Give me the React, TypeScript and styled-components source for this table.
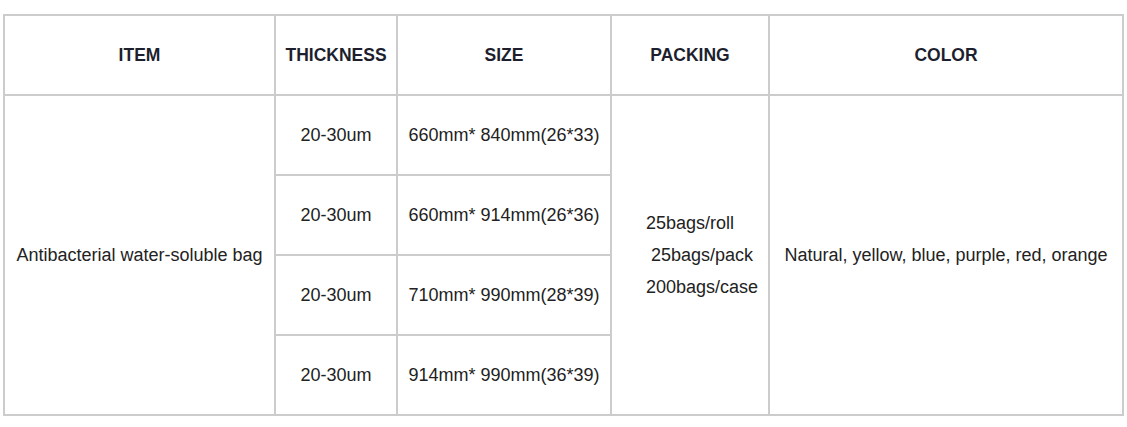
import React from "react";
import styled, { createGlobalStyle } from "styled-components";

const Global = createGlobalStyle`
  html, body { margin: 0; padding: 0; background: #ffffff; }
  body { padding: 14px 0 0 3px; font-family: "Liberation Sans", Arial, sans-serif; }
`;

const Grid = styled.div`
  display: grid;
  width: 1121px;
  grid-template-columns: 271px 122px 214px 158px 354px;
  grid-template-rows: repeat(5, 80px);
  border-top: 2px solid #cccccc;
  border-left: 2px solid #cccccc;
  box-sizing: border-box;
`;

const Cell = styled.div<{ $col?: number; $row?: number; $rows?: number; $head?: boolean }>`
  box-sizing: border-box;
  border-right: 2px solid #cccccc;
  border-bottom: 2px solid #cccccc;
  display: flex;
  align-items: center;
  justify-content: center;
  text-align: center;
  ${(p) => (p.$col ? `grid-column: ${p.$col};` : "")}
  ${(p) => (p.$row ? `grid-row: ${p.$row} / span ${p.$rows ?? 1};` : "")}
  font-size: ${(p) => (p.$head ? "17.5px" : "18px")};
  font-weight: ${(p) => (p.$head ? 700 : 400)};
  color: ${(p) => (p.$head ? "#1e1f2e" : "#222222")};
  white-space: nowrap;
`;

const PackCell = styled(Cell)`
  justify-content: flex-start;
  padding-left: 34px;
`;

const Lines = styled.div`
  display: flex;
  flex-direction: column;
  align-items: flex-start;
  line-height: 32px;
`;

const Line = styled.span<{ $indent?: number }>`
  padding-left: ${(p) => p.$indent ?? 0}px;
`;

const headers = ["ITEM", "THICKNESS", "SIZE", "PACKING", "COLOR"];
const sizes = [
  "660mm* 840mm(26*33)",
  "660mm* 914mm(26*36)",
  "710mm* 990mm(28*39)",
  "914mm* 990mm(36*39)",
];

export default function App() {
  return (
    <>
      <Global />
      <Grid>
        {headers.map((h) => (
          <Cell key={h} $head>
            {h}
          </Cell>
        ))}
        <Cell $col={1} $row={2} $rows={4}>
          Antibacterial water-soluble bag
        </Cell>
        {sizes.map((s, i) => (
          <React.Fragment key={s}>
            <Cell $col={2} $row={i + 2}>20-30um</Cell>
            <Cell $col={3} $row={i + 2}>{s}</Cell>
          </React.Fragment>
        ))}
        <PackCell $col={4} $row={2} $rows={4}>
          <Lines>
            <Line>25bags/roll</Line>
            <Line $indent={5}>25bags/pack</Line>
            <Line>200bags/case</Line>
          </Lines>
        </PackCell>
        <Cell $col={5} $row={2} $rows={4}>
          Natural, yellow, blue, purple, red, orange
        </Cell>
      </Grid>
    </>
  );
}
